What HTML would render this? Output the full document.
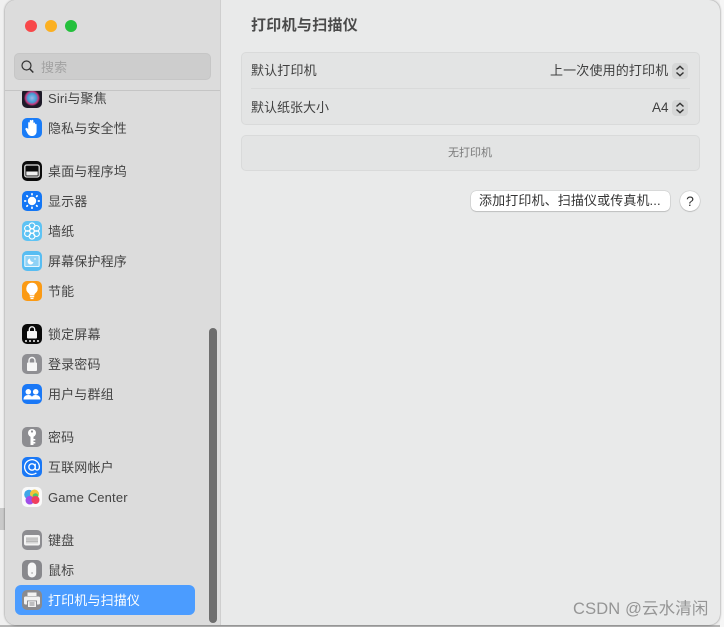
<!DOCTYPE html>
<html><head><meta charset="utf-8">
<style>
html,body{margin:0;padding:0}
body{width:724px;height:627px;overflow:hidden;position:relative;background:#f0f0f0;font-family:"Liberation Sans","Noto Sans CJK SC",sans-serif;color:#3c3c3c}
.a{position:absolute}
#win{left:5px;top:0;width:715px;height:625px;border-radius:11px;background:#e9eaea;overflow:hidden;box-shadow:0 0 2px rgba(0,0,0,.5)}
#side{left:5px;top:0;width:215px;height:625px;background:#dcdcdc;border-right:1px solid #cfcfcf;border-radius:11px 0 0 11px}
.t{position:absolute;left:48px;font-size:13px;letter-spacing:.15px;line-height:18px;height:18px;white-space:nowrap;color:#444}
.i{position:absolute;left:22px;width:20px;height:20px;border-radius:5px;overflow:hidden}
.i svg{display:block;width:20px;height:20px}
.dot{position:absolute;top:20px;width:12px;height:12px;border-radius:50%}
.txt{position:absolute;font-size:13px;line-height:18px;white-space:nowrap;color:#3f3f3f}
.st{position:absolute;width:16px;height:16px;background:#d6d7d7;border-radius:4px}
</style></head><body>
<div class="a" style="left:0;top:508px;width:5px;height:22px;background:#c9c9c9"></div>
<div class="a" style="left:0;top:625px;width:724px;height:2px;background:#b5b5b5"></div>
<div class="a" style="left:720px;top:0;width:4px;height:627px;background:#f6f6f6"></div>
<div class="a" id="win"></div>
<div class="a" id="side"></div>

<div class="dot" style="left:25px;background:#f8484a"></div>
<div class="dot" style="left:45px;background:#fbb021"></div>
<div class="dot" style="left:65px;background:#24c03c"></div>

<div class="a" style="left:14px;top:53px;width:197px;height:27px;background:#cdcdcd;border:1px solid #c6c6c6;border-radius:5px;box-sizing:border-box"></div>
<svg class="a" style="left:20px;top:60px" width="15" height="14" viewBox="0 0 15 14"><circle cx="6.500" cy="5.500" r="4.500" fill="none" stroke="#333" stroke-width="1.200"/><path d="M9.900 9L13.300 12.500" stroke="#333" stroke-width="1.500"/></svg>
<div class="t" style="left:41px;top:59px;color:#a2a2a2">搜索</div>
<div class="a" style="left:5px;top:90px;width:215px;height:1px;background:#c5c5c5"></div>

<!-- Siri -->
<div class="a" style="left:5px;top:91px;width:215px;height:27px;overflow:hidden">
 <div class="i" style="left:17px;top:-3px;background:#1d1a28"><svg viewBox="0 0 20 20"><defs><radialGradient id="s" cx=".5" cy=".5" r=".5"><stop offset="0" stop-color="#9fb6e8"/><stop offset=".55" stop-color="#3f9fd6"/><stop offset=".8" stop-color="#c9377d"/><stop offset="1" stop-color="#2a1c30"/></radialGradient></defs><circle cx="10" cy="10" r="8" fill="url(#s)"/></svg></div>
 <div class="t" style="left:43px;top:-1px">Siri与聚焦</div>
</div>
<div class="i" style="top:118px;background:#1a7cf7"><svg viewBox="0 0 20 20"><path d="M3.800 10.200c.9-.7 1.800 0 2.400 1.200V5c0-1.200 1.500-1.200 1.600 0V3c0-1.300 1.700-1.300 1.800 0v1.600V2.800c0-1.300 1.800-1.300 1.800 0v2.600c.1-1.200 1.700-1.200 1.700 0v1.200c.2-1 1.500-.9 1.500.2v6.400c0 3-1.900 4.800-4.800 4.800-2.300 0-3.500-1.200-4.500-3L3.500 11.500c-.3-.5-.2-1 .3-1.300z" fill="#fff"/></svg></div>
<div class="t" style="top:120px">隐私与安全性</div>

<div class="i" style="top:161px;background:#0b0b0b"><svg viewBox="0 0 20 20"><rect x="2.800" y="4" width="14.400" height="12" rx="1.800" fill="none" stroke="#e0e0e0" stroke-width="1.300"/><rect x="4.300" y="10.500" width="11.400" height="4" fill="#f0f0f0"/></svg></div>
<div class="t" style="top:163px">桌面与程序坞</div>

<div class="i" style="top:191px;background:#1376f5"><svg viewBox="0 0 20 20"><circle cx="10" cy="10" r="4.200" fill="#fff"/><g stroke="#fff" stroke-width="1.700" stroke-linecap="round"><path d="M10 2.800v.8M10 16.400v.8M2.800 10h.8M16.400 10h.8M4.900 4.900l.5.5M14.600 14.600l.5.5M4.900 15.100l.5-.5M14.600 5.400l.5-.5"/></g></svg></div>
<div class="t" style="top:193px">显示器</div>

<div class="i" style="top:221px;background:#5ec3f4"><svg viewBox="0 0 20 20"><g fill="none" stroke="#fff" stroke-width="1.100"><circle cx="10" cy="10" r="2.200"/><circle cx="10" cy="4.800" r="2.900"/><circle cx="10" cy="15.200" r="2.900"/><circle cx="5.500" cy="7.400" r="2.900"/><circle cx="14.500" cy="7.400" r="2.900"/><circle cx="5.500" cy="12.600" r="2.900"/><circle cx="14.500" cy="12.600" r="2.900"/></g></svg></div>
<div class="t" style="top:223px">墙纸</div>

<div class="i" style="top:251px;background:#58bdf2"><svg viewBox="0 0 20 20"><rect x="2.800" y="4.500" width="14.400" height="11" rx="1" fill="#8fd2f6" stroke="#e8f7fe" stroke-width="1.100"/><path d="M8 7.500a3 3 0 1 0 3.500 3.500 3.200 3.200 0 0 1-3.500-3.500z" fill="#fff"/><circle cx="13" cy="8" r=".7" fill="#fff"/></svg></div>
<div class="t" style="top:253px">屏幕保护程序</div>

<div class="i" style="top:281px;background:#fb9a14"><svg viewBox="0 0 20 20"><path d="M10 1.800a5.800 5.800 0 0 0-3.400 10.400c.8.700 1 1.400 1.100 2.300h4.600c.1-.9.300-1.600 1.100-2.300A5.800 5.800 0 0 0 10 1.800z" fill="#fff"/><rect x="7.800" y="15" width="4.400" height="1.300" fill="#fff"/><rect x="8.500" y="16.800" width="3" height="1.300" fill="#fff"/></svg></div>
<div class="t" style="top:283px">节能</div>

<div class="i" style="top:324px;background:#0a0a0a"><svg viewBox="0 0 20 20"><rect x="5" y="7" width="10" height="7.500" rx="1" fill="#f6f6f6"/><path d="M7.300 7.500V5.500a2.700 2.700 0 0 1 5.400 0v2" fill="none" stroke="#f6f6f6" stroke-width="1.400"/><g fill="#f6f6f6"><circle cx="4" cy="17" r="1"/><circle cx="8" cy="17" r="1"/><circle cx="12" cy="17" r="1"/><circle cx="16" cy="17" r="1"/></g></svg></div>
<div class="t" style="top:326px">锁定屏幕</div>

<div class="i" style="top:354px;background:#8f8f93"><svg viewBox="0 0 20 20"><rect x="5" y="8.500" width="10" height="8.500" rx="1" fill="#f6f6f6"/><path d="M7 9V6.500a3 3 0 0 1 6 0V9" fill="none" stroke="#f6f6f6" stroke-width="1.400"/></svg></div>
<div class="t" style="top:356px">登录密码</div>

<div class="i" style="top:384px;background:#1a78f6"><svg viewBox="0 0 20 20"><g fill="#fff"><circle cx="6.300" cy="7.800" r="2.800"/><circle cx="13.700" cy="7.800" r="2.800"/><path d="M1.500 15.500c0-3 2.200-4.500 4.800-4.500s3.400 1.200 3.700 1.900c.3-.7 1.100-1.900 3.700-1.900s4.800 1.500 4.800 4.500z"/></g></svg></div>
<div class="t" style="top:386px">用户与群组</div>

<div class="i" style="top:427px;background:#8d8d91"><svg viewBox="0 0 20 20"><circle cx="10" cy="6" r="4" fill="#fff"/><rect x="8.500" y="8" width="3" height="10" fill="#fff"/><rect x="11" y="12" width="2.300" height="1.500" fill="#fff"/><rect x="11" y="15" width="2.300" height="1.500" fill="#fff"/><circle cx="10" cy="4.500" r="1.100" fill="#8d8d91"/></svg></div>
<div class="t" style="top:429px">密码</div>

<div class="i" style="top:457px;background:#1a78f6"><svg viewBox="0 0 20 20"><circle cx="10" cy="10" r="3.200" fill="none" stroke="#fff" stroke-width="1.300"/><path d="M13.200 6.800v4.400c0 2.600 4.200 2.500 4.200-1.200a7.400 7.400 0 1 0-3 6" fill="none" stroke="#fff" stroke-width="1.300"/></svg></div>
<div class="t" style="top:459px">互联网帐户</div>

<div class="i" style="top:487px;background:#fafafa"><svg viewBox="0 0 20 20"><circle cx="7" cy="7.500" r="4.800" fill="#3fa6e8"/><circle cx="12.500" cy="7" r="4.500" fill="#f2c53a"/><circle cx="13.500" cy="9" r="2.800" fill="#4cc76a"/><circle cx="7.800" cy="13.200" r="4.300" fill="#a04ee8"/><circle cx="13.500" cy="13" r="4" fill="#f03f5e"/></svg></div>
<div class="t" style="top:489px;letter-spacing:.15px">Game Center</div>

<div class="i" style="top:530px;background:#8d8d91"><svg viewBox="0 0 20 20"><rect x="2" y="5" width="16" height="10.500" rx="2" fill="#f4f4f4"/><rect x="4" y="7" width="12" height="6.500" fill="#d5d5d5"/><g stroke="#a5a5a5" stroke-width=".8"><path d="M4 9h12M4 11.200h12"/></g></svg></div>
<div class="t" style="top:532px">键盘</div>

<div class="i" style="top:560px;background:#88888c"><svg viewBox="0 0 20 20"><rect x="5.800" y="2.500" width="8.400" height="15" rx="4.200" fill="#f6f6f6"/><rect x="9.600" y="12" width=".9" height="2" fill="#999"/></svg></div>
<div class="t" style="top:562px">鼠标</div>

<div class="a" style="left:15px;top:585px;width:180px;height:30px;background:#4b9cff;border-radius:6px"></div>
<div class="i" style="top:590px;background:#8a8a8e"><svg viewBox="0 0 20 20"><rect x="5.500" y="2.500" width="9" height="3.500" fill="#f2f2f2"/><rect x="2" y="6.500" width="16" height="8" rx="1.500" fill="#f2f2f2"/><rect x="5" y="10.500" width="10" height="7" fill="#8a8a8e"/><rect x="6" y="11.300" width="8" height="5.700" fill="#f2f2f2"/><path d="M7.500 13h5M7.500 15h5" stroke="#8a8a8e" stroke-width=".9"/></svg></div>
<div class="t" style="top:592px;color:#fff">打印机与扫描仪</div>

<div class="a" style="left:209px;top:328px;width:8px;height:295px;background:#6e6e6e;border-radius:4px"></div>

<!-- main -->
<div class="txt" style="left:251px;top:16px;font-size:15px;letter-spacing:.3px;line-height:20px;font-weight:bold;color:#4a4a4a">打印机与扫描仪</div>

<div class="a" style="left:241px;top:52px;width:459px;height:73px;box-sizing:border-box;background:#e3e4e4;border:1px solid #d9dada;border-radius:5px"></div>
<div class="a" style="left:251px;top:88px;width:439px;height:1px;background:#d9dada"></div>
<div class="txt" style="left:251px;top:62px;letter-spacing:.15px">默认打印机</div>
<div class="txt" style="left:251px;top:99px">默认纸张大小</div>
<div class="txt" style="left:550px;top:62px;letter-spacing:.15px">上一次使用的打印机</div>
<div class="txt" style="left:652px;top:99px;font-size:13.500px">A4</div>
<div class="st" style="left:672px;top:63px"></div>
<div class="st" style="left:672px;top:100px"></div>
<svg class="a" style="left:672px;top:63px" width="16" height="16" viewBox="0 0 16 16"><path d="M4.500 6.500L8 3.300l3.500 3.200M4.500 9.500L8 12.700l3.500-3.200" fill="none" stroke="#333" stroke-width="1.400"/></svg>
<svg class="a" style="left:672px;top:100px" width="16" height="16" viewBox="0 0 16 16"><path d="M4.500 6.500L8 3.300l3.500 3.200M4.500 9.500L8 12.700l3.500-3.200" fill="none" stroke="#333" stroke-width="1.400"/></svg>

<div class="a" style="left:241px;top:135px;width:459px;height:36px;box-sizing:border-box;background:#e3e4e4;border:1px solid #d9dada;border-radius:5px"></div>
<div class="txt" style="left:448px;top:144px;font-size:11px;color:#7a7a7a">无打印机</div>

<div class="a" style="left:471px;top:191px;width:199px;height:20px;background:#fff;border-radius:5px;box-shadow:0 0 1px rgba(0,0,0,.45),0 1px 1px rgba(0,0,0,.12)"></div>
<div class="txt" style="left:479px;top:191px;line-height:19px;color:#333;letter-spacing:.12px">添加打印机、扫描仪或传真机...</div>
<div class="a" style="left:680px;top:191px;width:20px;height:20px;border-radius:50%;background:#fff;box-shadow:0 0 1px rgba(0,0,0,.45),0 1px 1px rgba(0,0,0,.12);text-align:center;font-size:14px;line-height:20px;color:#333">?</div>

<div class="txt" style="left:573px;top:599px;font-size:16.500px;letter-spacing:.15px;line-height:20px;color:rgba(120,120,120,.75)">CSDN @云水清闲</div>
</body></html>
